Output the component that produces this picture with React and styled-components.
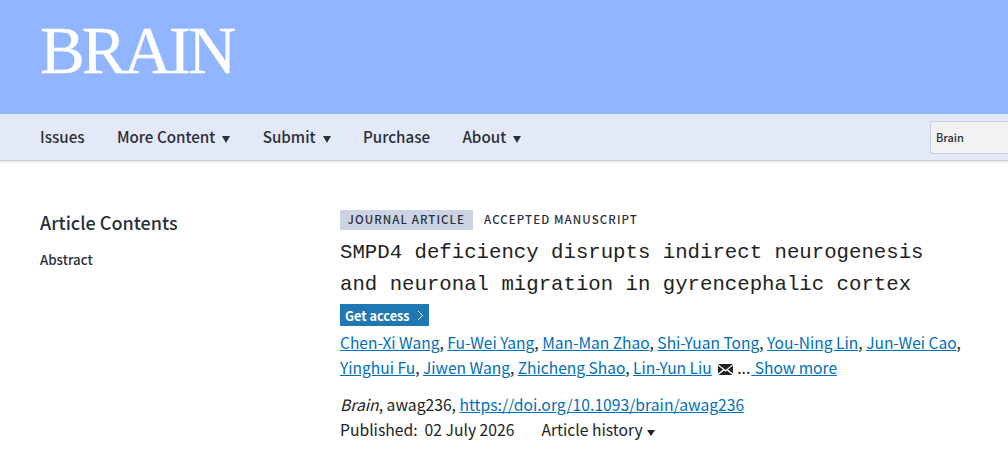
import React from 'react';
import styled, { createGlobalStyle } from 'styled-components';

const Global = createGlobalStyle`
  html, body { margin: 0; padding: 0; background: #fff; overflow: hidden; }
  body { font-family: "Noto Sans CJK SC", "Noto Sans", sans-serif; color: #222; }
`;
const Page = styled.div`width: 1008px; height: 464px; overflow: hidden;`;
const Masthead = styled.header`height: 114px; background: #92b5ff; padding: 15px 0 0 40px; box-sizing: border-box;`;
const Logo = styled.div`font-family: "Liberation Serif", serif; font-size: 67px; line-height: 70px; letter-spacing: -3px; color: #fff; -webkit-text-stroke: 0.3px #fff;`;
const Nav = styled.nav`height: 46px; background: #e3e9f6; display: flex; align-items: center; padding-left: 40px; border-bottom: 1px solid #c9cbd0; box-shadow: 0 1px 3px rgba(0,0,0,.12);`;
const NavItem = styled.span`font-size: 15.2px; line-height: 44px; margin-bottom: 2px; font-weight: 500; color: #2a2f3a; margin-right: 32.3px; white-space: nowrap;`;
const Caret = styled.span`display: inline-block; width: 0; height: 0; margin-left: 7px; border-left: 4.5px solid transparent; border-right: 4.5px solid transparent; border-top: 7px solid #2a2f3a; vertical-align: 0;`;
const Search = styled.div`margin-left: auto; width: 78px; height: 33px; box-sizing: border-box; background: #f2f2f2; border: 1px solid #c9cee2; border-right: 0; border-radius: 3px 0 0 3px; font-size: 11px; font-weight: 500; line-height: 31px; padding-left: 5px; color: #2a2f3a;`;
const Body = styled.main`display: flex; padding: 49px 0 0 40px;`;
const Side = styled.aside`width: 300px; flex: none;`;
const SideTitle = styled.h2`margin: -2px 0 0; font-size: 18px; line-height: 28px; font-weight: 500; color: #2a2f3a;`;
const SideLink = styled.div`margin-top: 14px; font-size: 13.3px; line-height: 20px; font-weight: 500; color: #2a2f3a;`;
const Content = styled.div`flex: 1; min-width: 0;`;
const Tags = styled.div`display: flex; align-items: center; gap: 11.5px; height: 20px;`;
const Tag = styled.span`background: #ccd3e3; padding: 0 7.5px; font-size: 11.5px; line-height: 19px; padding-bottom: 1px; font-weight: 500; letter-spacing: 1.08px; color: #2a2f3a;`;
const Plain = styled.span`font-size: 11.5px; line-height: 19px; padding-bottom: 1px; font-weight: 500; letter-spacing: 1.08px; color: #2a2f3a;`;
const Title = styled.h1`margin: 7px 0 0; font-family: "Liberation Mono", monospace; font-weight: 400; font-size: 20.7px; line-height: 32px; color: #222;`;
const Access = styled.div`display: flex; width: fit-content; align-items: center; gap: 7px; margin-top: 3px; height: 22px; background: #1f77b4; color: #fff; padding: 0 5px 0 5px; font-size: 12.7px; font-weight: 700;`;
const Authors = styled.div`margin-top: 4px; font-size: 15.55px; line-height: 25px; width: 630px; color: #222;`;
const A = styled.a`color: #006fb7; text-decoration: underline;`;
const Meta = styled.div`font-size: 15.7px; line-height: 25px; margin-top: ${p => p.$mt || 0}px; color: #222; white-space: pre;`;
const Hist = styled.span`margin-left: 27px;`;
const Mail = styled.svg`width: 15px; height: 11px; vertical-align: -1px; margin: 0 4px 0 3px;`;
const Small = styled.span`display: inline-block; width: 0; height: 0; margin-left: 4px; border-left: 4px solid transparent; border-right: 4px solid transparent; border-top: 6px solid #222;`;
const Ellipsis = styled.span`margin-right: 1px;`;

const names = ['Chen-Xi Wang','Fu-Wei Yang','Man-Man Zhao','Shi-Yuan Tong','You-Ning Lin','Jun-Wei Cao','Yinghui Fu','Jiwen Wang','Zhicheng Shao','Lin-Yun Liu'];

export default function App() {
  return (
    <Page>
      <Global />
      <Masthead><Logo>BRAIN</Logo></Masthead>
      <Nav>
        <NavItem>Issues</NavItem>
        <NavItem>More Content<Caret /></NavItem>
        <NavItem>Submit<Caret /></NavItem>
        <NavItem>Purchase</NavItem>
        <NavItem>About<Caret /></NavItem>
        <Search>Brain</Search>
      </Nav>
      <Body>
        <Side>
          <SideTitle>Article Contents</SideTitle>
          <SideLink>Abstract</SideLink>
        </Side>
        <Content>
          <Tags><Tag>JOURNAL ARTICLE</Tag><Plain>ACCEPTED MANUSCRIPT</Plain></Tags>
          <Title>SMPD4 deficiency disrupts indirect neurogenesis<br/>and neuronal migration in gyrencephalic cortex</Title>
          <Access>Get access
            <svg width="7" height="11" viewBox="0 0 7 11" fill="none" stroke="#fff" strokeWidth="1"><path d="M1 1l4.5 4.5L1 10"/></svg>
          </Access>
          <Authors>
            {names.map((n,i)=>(<React.Fragment key={n}><A>{n}</A>{i<9?', ':' '}</React.Fragment>))}
            <Mail viewBox="0 0 15 11"><path fill="#222" d="M0 0h15L7.5 6zM0 1.5v8L5 5.5zM15 1.5v8L10 5.5zM.5 11h14L9 6.5 7.5 7.7 6 6.5z"/></Mail><Ellipsis>...</Ellipsis><A>{' Show more'}</A>
          </Authors>
          <Meta $mt={12}><i>Brain</i>, awag236, <A>https://doi.org/10.1093/brain/awag236</A></Meta>
          <Meta>{'Published:  02 July 2026'}<Hist>Article history<Small /></Hist></Meta>
        </Content>
      </Body>
    </Page>
  );
}
